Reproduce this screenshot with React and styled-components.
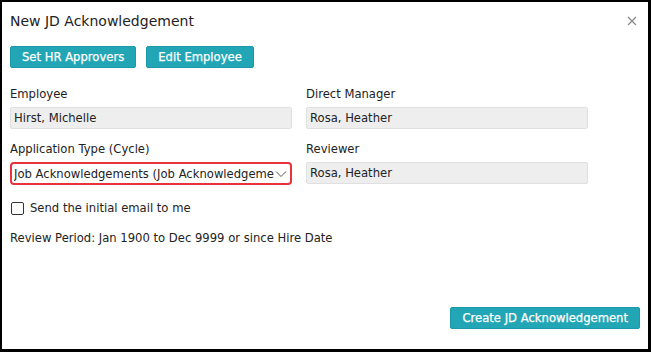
import React from 'react';
import styled, { createGlobalStyle } from 'styled-components';

const GlobalStyle = createGlobalStyle`
  html, body { margin: 0; padding: 0; background: #fff; }
  * { box-sizing: border-box; }
`;

const Frame = styled.div`
  width: 651px;
  height: 352px;
  border-style: solid;
  border-color: #000;
  border-width: 2px 3px 3px 2px;
  background: #fff;
  display: flex;
  flex-direction: column;
  padding: 0 8px 0 8px;
  font-family: 'DejaVu Sans', Tahoma, sans-serif;
  font-size: 11.6px;
  color: #333;
`;

const Header = styled.div`
  display: flex;
  justify-content: space-between;
  align-items: center;
  height: 36px;
  padding-top: 2px;
`;

const Title = styled.h1`
  margin: 0;
  font-size: 14px;
  font-weight: normal;
  color: #222;
`;

const Close = styled.button`
  border: none;
  background: none;
  padding: 0;
  margin-right: 3px;
  cursor: pointer;
  display: flex;
`;

const ButtonRow = styled.div`
  display: flex;
  gap: 10px;
  margin-top: 8px;
`;

const Button = styled.button`
  height: 22px;
  padding: 0 11px;
  border: 1px solid #1d9aaa;
  border-radius: 2px;
  background: #22a6b6;
  color: #fff;
  font-family: inherit;
  font-size: 11.6px;
  font-weight: normal;
  -webkit-text-stroke: 0.25px #fff;
  cursor: pointer;
`;

const Grid = styled.div`
  display: grid;
  grid-template-columns: 282px 282px;
  column-gap: 14px;
  row-gap: 13px;
  margin-top: 19px;
`;

const Field = styled.div`
  display: flex;
  flex-direction: column;
  gap: 6px;
`;

const Label = styled.label`
  color: #222;
`;

const Input = styled.div`
  height: 22px;
  padding: 0 3px;
  display: flex;
  align-items: center;
  background: #eeeeee;
  border: 1px solid #e0e0e0;
  border-radius: 2px;
  color: #222;
`;

const Select = styled.div`
  height: 23px;
  padding: 0 3px 0 2px;
  display: flex;
  align-items: center;
  border: 2px solid #e8323c;
  border-radius: 4px;
  background: #fff;
  color: #222;
  white-space: nowrap;
  overflow: hidden;
  gap: 1px;

  span {
    flex: 1;
    overflow: hidden;
  }
`;

const CheckRow = styled.label`
  display: flex;
  align-items: center;
  gap: 6px;
  margin-top: 16px;
  color: #222;
`;

const Box = styled.span`
  width: 13px;
  height: 13px;
  border: 1px solid #333;
  border-radius: 2px;
  margin-left: 1px;
`;

const Period = styled.div`
  margin-top: 16px;
  color: #222;
`;

const Footer = styled.div`
  margin-top: auto;
  margin-bottom: 20px;
  display: flex;
  justify-content: flex-end;
`;

export default function App() {
  return (
    <>
      <GlobalStyle />
      <Frame>
        <Header>
          <Title>New JD Acknowledgement</Title>
          <Close aria-label="Close">
            <svg width="10" height="10" viewBox="0 0 10 10">
              <path d="M1 1L9 9M9 1L1 9" stroke="#8a8a8a" strokeWidth="1.3" />
            </svg>
          </Close>
        </Header>
        <ButtonRow>
          <Button>Set HR Approvers</Button>
          <Button>Edit Employee</Button>
        </ButtonRow>
        <Grid>
          <Field>
            <Label>Employee</Label>
            <Input>Hirst, Michelle</Input>
          </Field>
          <Field>
            <Label>Direct Manager</Label>
            <Input>Rosa, Heather</Input>
          </Field>
          <Field>
            <Label>Application Type (Cycle)</Label>
            <Select>
              <span>Job Acknowledgements (Job Acknowledgements)</span>
              <svg width="12" height="8" viewBox="0 0 12 8">
                <path d="M1 1.5L6 6.5L11 1.5" fill="none" stroke="#555" strokeWidth="1" />
              </svg>
            </Select>
          </Field>
          <Field>
            <Label>Reviewer</Label>
            <Input>Rosa, Heather</Input>
          </Field>
        </Grid>
        <CheckRow>
          <Box />
          Send the initial email to me
        </CheckRow>
        <Period>Review Period: Jan 1900 to Dec 9999 or since Hire Date</Period>
        <Footer>
          <Button>Create JD Acknowledgement</Button>
        </Footer>
      </Frame>
    </>
  );
}
